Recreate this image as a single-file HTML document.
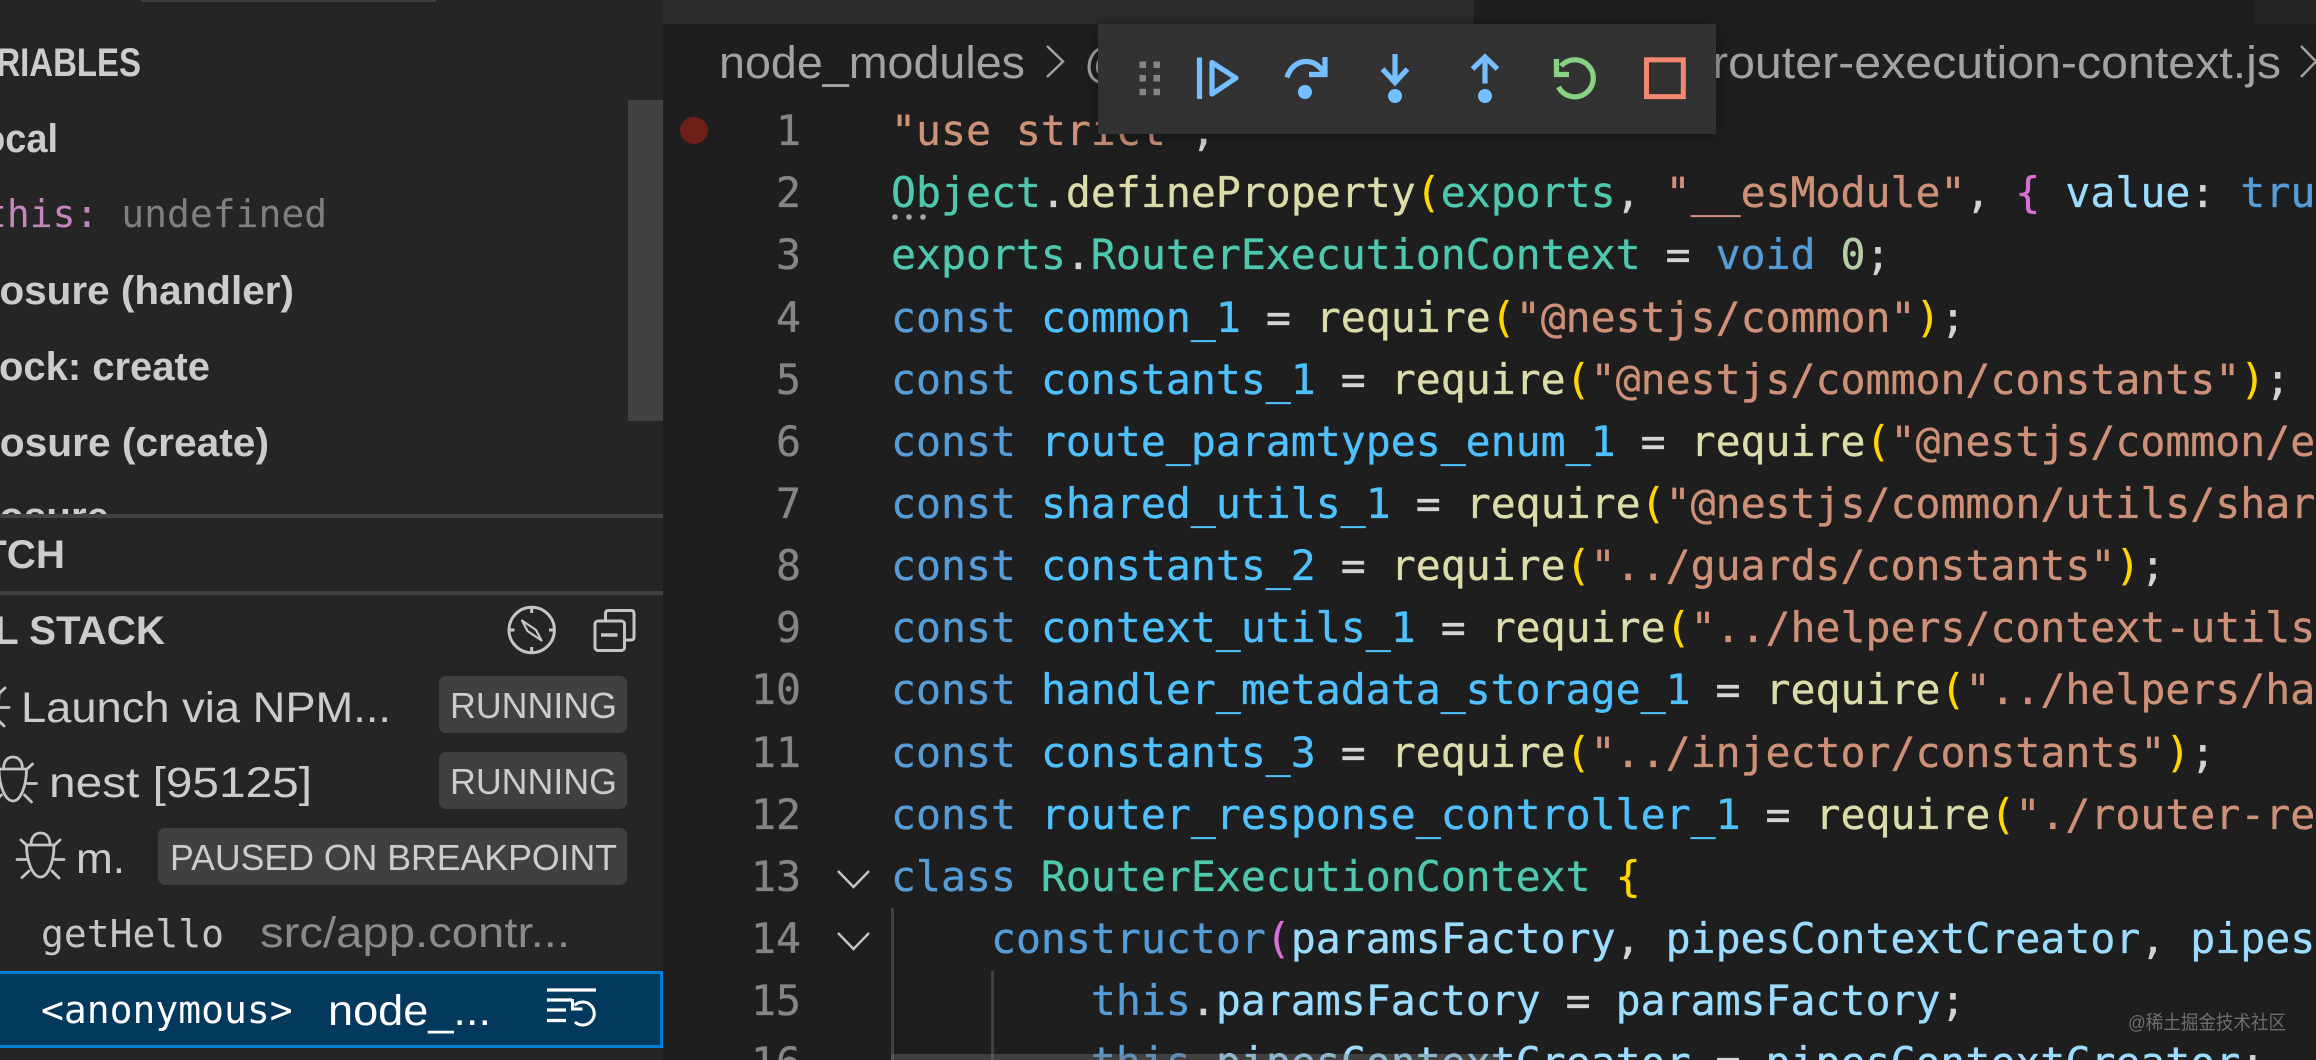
<!DOCTYPE html>
<html lang="en"><head><meta charset="utf-8"><title>VS Code Debug</title>
<style>
html,body{margin:0;padding:0;background:#1e1e1e;width:2316px;height:1060px;overflow:hidden}
svg{display:block}
text{white-space:pre}
.m{font-family:"DejaVu Sans Mono","Liberation Mono",monospace}
.c{font-size:41.5px;stroke-width:.35px}
.s{font-family:"Liberation Sans",sans-serif}
.b{font-family:"Liberation Sans",sans-serif;font-weight:700;font-size:40.3px;fill:#cccccc}
.n{font-size:41.5px;fill:#858585;stroke:#858585;stroke-width:.35px;text-anchor:end}
.k{fill:#569cd6;stroke:#569cd6}.v{fill:#9cdcfe;stroke:#9cdcfe}.w{fill:#4fc1ff;stroke:#4fc1ff}.f{fill:#dcdcaa;stroke:#dcdcaa}.t{fill:#4ec9b0;stroke:#4ec9b0}.r{fill:#ce9178;stroke:#ce9178}.p{fill:#d4d4d4;stroke:#d4d4d4}.o{fill:#b5cea8;stroke:#b5cea8}.g{fill:#ffd700;stroke:#ffd700}.h{fill:#da70d6;stroke:#da70d6}
</style></head><body>
<svg xmlns="http://www.w3.org/2000/svg" width="2316" height="1060" viewBox="0 0 2316 1060">
<defs>
<filter id="sh" x="-5%" y="-30%" width="110%" height="170%"><feDropShadow dx="0" dy="2" stdDeviation="9" flood-color="#000" flood-opacity=".4"/></filter>
<g id="bug" fill="none" stroke="#c5c5c5" stroke-width="2.8" stroke-linecap="round">
<path d="M31 845C31 837 35 833 40.500 833C46 833 50 837 50 845"/>
<path d="M26.500 845H54C54 862 48 877 40.500 877C33 877 26.500 862 26.500 845Z"/>
<path d="M17 859.500H26M55 859.500H64M21 840L27 845.500M60 840L54 845.500M22 877.500L29 871M59 878L52 871"/>
</g>
</defs>

<!-- editor -->
<rect x="663" y="0" width="1653" height="1060" fill="#1e1e1e"/>
<rect x="663" y="0" width="811" height="24" fill="#2b2b2b"/>
<rect x="2255" y="0" width="61" height="24" fill="#232323"/>

<!-- breadcrumb -->
<text class="s" x="719" y="78" font-size="45" fill="#a3a3a3" textLength="306" lengthAdjust="spacingAndGlyphs">node_modules</text>
<polyline points="1047,46 1063,61.500 1047,77" fill="none" stroke="#a3a3a3" stroke-width="2.4"/>
<text class="s" x="1084" y="78" font-size="45" fill="#a3a3a3">@nestjs</text>
<text class="s" x="1712" y="78" font-size="45" fill="#a3a3a3" textLength="569" lengthAdjust="spacingAndGlyphs">router-execution-context.js</text>
<polyline points="2301,46 2316,61.500 2301,77" fill="none" stroke="#a3a3a3" stroke-width="2.4"/>

<!-- glyph margin -->
<ellipse cx="694" cy="130.500" rx="14" ry="13.500" fill="#6f1f17"/>

<!-- line numbers -->
<g class="m">
<text class="n" x="801" y="145">1</text>
<text class="n" x="801" y="207">2</text>
<text class="n" x="801" y="269">3</text>
<text class="n" x="801" y="332">4</text>
<text class="n" x="801" y="394">5</text>
<text class="n" x="801" y="456">6</text>
<text class="n" x="801" y="518">7</text>
<text class="n" x="801" y="580">8</text>
<text class="n" x="801" y="642">9</text>
<text class="n" x="801" y="704">10</text>
<text class="n" x="801" y="767">11</text>
<text class="n" x="801" y="829">12</text>
<text class="n" x="801" y="891">13</text>
<text class="n" x="801" y="953">14</text>
<text class="n" x="801" y="1015">15</text>
<text class="n" x="801" y="1077">16</text>
</g>

<!-- fold chevrons -->
<polyline points="838,871 853.500,887 869,871" fill="none" stroke="#c5c5c5" stroke-width="2.4"/>
<polyline points="838,933 853.500,949 869,933" fill="none" stroke="#c5c5c5" stroke-width="2.4"/>

<!-- indent guides -->
<rect x="891" y="908" width="3" height="152" fill="#404040"/>
<rect x="991" y="971" width="3" height="89" fill="#404040"/>

<!-- code -->
<g class="m c">
<text x="891" y="145"><tspan class="r">"use strict"</tspan><tspan class="p">;</tspan></text>
<text x="891" y="207"><tspan class="t">Object</tspan><tspan class="p">.</tspan><tspan class="f">defineProperty</tspan><tspan class="g">(</tspan><tspan class="t">exports</tspan><tspan class="p">, </tspan><tspan class="r">"__esModule"</tspan><tspan class="p">, </tspan><tspan class="h">{</tspan><tspan class="p"> </tspan><tspan class="v">value</tspan><tspan class="p">: </tspan><tspan class="k">true</tspan></text>
<text x="891" y="269"><tspan class="t">exports</tspan><tspan class="p">.</tspan><tspan class="t">RouterExecutionContext</tspan><tspan class="p"> = </tspan><tspan class="k">void</tspan><tspan class="p"> </tspan><tspan class="o">0</tspan><tspan class="p">;</tspan></text>
<text x="891" y="332"><tspan class="k">const</tspan><tspan class="p"> </tspan><tspan class="w">common_1</tspan><tspan class="p"> = </tspan><tspan class="f">require</tspan><tspan class="g">(</tspan><tspan class="r">"@nestjs/common"</tspan><tspan class="g">)</tspan><tspan class="p">;</tspan></text>
<text x="891" y="394"><tspan class="k">const</tspan><tspan class="p"> </tspan><tspan class="w">constants_1</tspan><tspan class="p"> = </tspan><tspan class="f">require</tspan><tspan class="g">(</tspan><tspan class="r">"@nestjs/common/constants"</tspan><tspan class="g">)</tspan><tspan class="p">;</tspan></text>
<text x="891" y="456"><tspan class="k">const</tspan><tspan class="p"> </tspan><tspan class="w">route_paramtypes_enum_1</tspan><tspan class="p"> = </tspan><tspan class="f">require</tspan><tspan class="g">(</tspan><tspan class="r">"@nestjs/common/enums/route-paramtypes.enum"</tspan></text>
<text x="891" y="518"><tspan class="k">const</tspan><tspan class="p"> </tspan><tspan class="w">shared_utils_1</tspan><tspan class="p"> = </tspan><tspan class="f">require</tspan><tspan class="g">(</tspan><tspan class="r">"@nestjs/common/utils/shared.utils"</tspan></text>
<text x="891" y="580"><tspan class="k">const</tspan><tspan class="p"> </tspan><tspan class="w">constants_2</tspan><tspan class="p"> = </tspan><tspan class="f">require</tspan><tspan class="g">(</tspan><tspan class="r">"../guards/constants"</tspan><tspan class="g">)</tspan><tspan class="p">;</tspan></text>
<text x="891" y="642"><tspan class="k">const</tspan><tspan class="p"> </tspan><tspan class="w">context_utils_1</tspan><tspan class="p"> = </tspan><tspan class="f">require</tspan><tspan class="g">(</tspan><tspan class="r">"../helpers/context-utils"</tspan></text>
<text x="891" y="704"><tspan class="k">const</tspan><tspan class="p"> </tspan><tspan class="w">handler_metadata_storage_1</tspan><tspan class="p"> = </tspan><tspan class="f">require</tspan><tspan class="g">(</tspan><tspan class="r">"../helpers/handler-metadata"</tspan></text>
<text x="891" y="767"><tspan class="k">const</tspan><tspan class="p"> </tspan><tspan class="w">constants_3</tspan><tspan class="p"> = </tspan><tspan class="f">require</tspan><tspan class="g">(</tspan><tspan class="r">"../injector/constants"</tspan><tspan class="g">)</tspan><tspan class="p">;</tspan></text>
<text x="891" y="829"><tspan class="k">const</tspan><tspan class="p"> </tspan><tspan class="w">router_response_controller_1</tspan><tspan class="p"> = </tspan><tspan class="f">require</tspan><tspan class="g">(</tspan><tspan class="r">"./router-response"</tspan></text>
<text x="891" y="891"><tspan class="k">class</tspan><tspan class="p"> </tspan><tspan class="t">RouterExecutionContext</tspan><tspan class="p"> </tspan><tspan class="g">{</tspan></text>
<text x="891" y="953"><tspan class="p">    </tspan><tspan class="k">constructor</tspan><tspan class="h">(</tspan><tspan class="v">paramsFactory</tspan><tspan class="p">, </tspan><tspan class="v">pipesContextCreator</tspan><tspan class="p">, </tspan><tspan class="v">pipes</tspan></text>
<text x="891" y="1015"><tspan class="p">        </tspan><tspan class="k">this</tspan><tspan class="p">.</tspan><tspan class="v">paramsFactory</tspan><tspan class="p"> = </tspan><tspan class="v">paramsFactory</tspan><tspan class="p">;</tspan></text>
<text x="891" y="1077"><tspan class="p">        </tspan><tspan class="k">this</tspan><tspan class="p">.</tspan><tspan class="v">pipesContextCreator</tspan><tspan class="p"> = </tspan><tspan class="v">pipesContextCreator</tspan><tspan class="p">;</tspan></text>
</g>

<!-- hint dots -->
<circle cx="895" cy="217" r="2.800" fill="#a8a8a8"/><circle cx="909" cy="217" r="2.800" fill="#a8a8a8"/><circle cx="923" cy="217" r="2.800" fill="#a8a8a8"/>

<!-- overlay band -->
<rect x="891" y="1054" width="610" height="6" fill="#797979" opacity=".38"/>

<!-- watermark -->
<text x="2128" y="1029" font-size="19.500" fill="#6e6e6e" textLength="158" lengthAdjust="spacingAndGlyphs" style="font-family:'Liberation Sans','Noto Sans CJK SC',sans-serif">@稀土掘金技术社区</text>

<!-- debug toolbar -->
<rect x="1098" y="24" width="618" height="110" fill="#333333" filter="url(#sh)"/>
<g fill="#858585">
<rect x="1139.500" y="61.500" width="6.500" height="6.500"/><rect x="1153.500" y="61.500" width="6.500" height="6.500"/>
<rect x="1139.500" y="75" width="6.500" height="6.500"/><rect x="1153.500" y="75" width="6.500" height="6.500"/>
<rect x="1139.500" y="88.700" width="6.500" height="6.500"/><rect x="1153.500" y="88.700" width="6.500" height="6.500"/>
</g>
<g fill="none" stroke="#75beff" stroke-width="5.200">
<path d="M1199.500 57.500V99"/>
<path d="M1212 62.500L1236 78L1212 94Z" stroke-linejoin="round"/>
<path d="M1287 77.500C1290 67 1298 61.500 1306 61.500C1313 61.500 1319 65 1323 72"/>
<path d="M1325 57V74.500H1309"/>
<path d="M1395 54V82"/>
<path d="M1382.500 69L1395 82.500L1407.500 69"/>
<path d="M1485 57V83.500"/>
<path d="M1472.500 69L1485 57L1497.500 69"/>
</g>
<g fill="#75beff">
<circle cx="1305" cy="92" r="7"/><circle cx="1395" cy="96" r="7"/><circle cx="1485" cy="96" r="7"/>
</g>
<g fill="none" stroke="#89d185" stroke-width="5.200">
<path d="M1558.500 87A18.500 18.500 0 1 0 1561 66"/>
<path d="M1556.500 59V74.500H1569"/>
</g>
<rect x="1646.500" y="59.800" width="36.800" height="36.800" fill="none" stroke="#f48771" stroke-width="5"/>

<!-- sidebar -->
<rect x="0" y="0" width="663" height="1060" fill="#252526"/>
<rect x="141" y="0" width="295" height="2" fill="#3f3f3f"/>
<rect x="628" y="100" width="35" height="321" fill="#424242"/>

<text class="b" x="-47" y="76" font-size="38" textLength="188" lengthAdjust="spacingAndGlyphs">VARIABLES</text>
<text class="b" x="-41" y="152" textLength="99" lengthAdjust="spacingAndGlyphs">Local</text>
<text class="m" x="-16" y="227" font-size="38"><tspan fill="#c586c0">this: </tspan><tspan fill="#808080">undefined</tspan></text>
<text class="b" x="-41" y="304" textLength="335" lengthAdjust="spacingAndGlyphs">Closure (handler)</text>
<text class="b" x="-41" y="380" textLength="251" lengthAdjust="spacingAndGlyphs">Block: create</text>
<text class="b" x="-41" y="456" textLength="310" lengthAdjust="spacingAndGlyphs">Closure (create)</text>
<text class="b" x="-41" y="530">Closure</text>
<rect x="0" y="514" width="663" height="546" fill="#252526"/>
<rect x="0" y="514" width="663" height="4" fill="#414141"/>
<text class="b" x="65" y="568" text-anchor="end" font-size="38">WATCH</text>
<rect x="0" y="591" width="663" height="4" fill="#414141"/>
<text class="b" x="165" y="644" text-anchor="end" font-size="37.500">CALL STACK</text>

<!-- compass -->
<g fill="none" stroke="#c5c5c5" stroke-width="3">
<circle cx="531.700" cy="630" r="22.700"/>
<path d="M531.700 607.500V613M531.700 647V652.500M509 630H514.500M549 630H554.500"/>
<path d="M522 620.500L536 630L541.500 640.500L527.500 631Z" stroke-width="2.200" stroke-linejoin="round"/>
</g>
<!-- collapse -->
<g fill="none" stroke="#c5c5c5" stroke-width="3">
<rect x="595" y="621" width="29.500" height="29.500" rx="3"/>
<path d="M605.500 621V613.500Q605.500 610.500 608.500 610.500H631Q634 610.500 634 613.500V637Q634 640 631 640H624.500"/>
<path d="M601 635H617.500" stroke-width="3.400"/>
</g>

<!-- stack rows -->
<use href="#bug" x="-55" y="-152"/>
<text class="s" x="21" y="722" font-size="43" fill="#cccccc" textLength="370" lengthAdjust="spacingAndGlyphs">Launch via NPM...</text>
<rect x="439" y="676" width="188" height="57" rx="7" fill="#404040"/>
<text class="s" x="450" y="718" font-size="36" fill="#cccccc" textLength="167" lengthAdjust="spacingAndGlyphs">RUNNING</text>

<use href="#bug" x="-27.500" y="-76"/>
<text class="s" x="49" y="797" font-size="43" fill="#cccccc" textLength="263" lengthAdjust="spacingAndGlyphs">nest [95125]</text>
<rect x="439" y="752" width="188" height="57" rx="7" fill="#404040"/>
<text class="s" x="450" y="794" font-size="36" fill="#cccccc" textLength="167" lengthAdjust="spacingAndGlyphs">RUNNING</text>

<use href="#bug"/>
<text class="s" x="76" y="873" font-size="43" fill="#cccccc" textLength="49" lengthAdjust="spacingAndGlyphs">m.</text>
<rect x="158" y="828" width="469" height="57" rx="7" fill="#404040"/>
<text class="s" x="170" y="870" font-size="36" fill="#cccccc" textLength="447" lengthAdjust="spacingAndGlyphs">PAUSED ON BREAKPOINT</text>

<text class="m" x="41" y="947" font-size="38" fill="#c5c5c5">getHello</text>
<text class="s" x="260" y="947" font-size="43" fill="#8a8a8a" textLength="310" lengthAdjust="spacingAndGlyphs">src/app.contr...</text>

<rect x="-6" y="972.500" width="667.500" height="74" fill="#04395e" stroke="#007fd4" stroke-width="3"/>
<text class="m" x="41" y="1023" font-size="38" fill="#ffffff">&lt;anonymous&gt;</text>
<text class="s" x="328" y="1025" font-size="43" fill="#ffffff" textLength="163" lengthAdjust="spacingAndGlyphs">node_...</text>
<g fill="none" stroke="#ffffff" stroke-width="3.300">
<path d="M547 990H596M547 1000H572M547 1010H566M547 1020.500H566"/>
<path d="M575 1022A11.500 11.500 0 1 0 574.500 1005.500" stroke-width="3"/>
<path d="M572.500 999V1009H582.500" stroke-width="3"/>
</g>
</svg>
</body></html>
